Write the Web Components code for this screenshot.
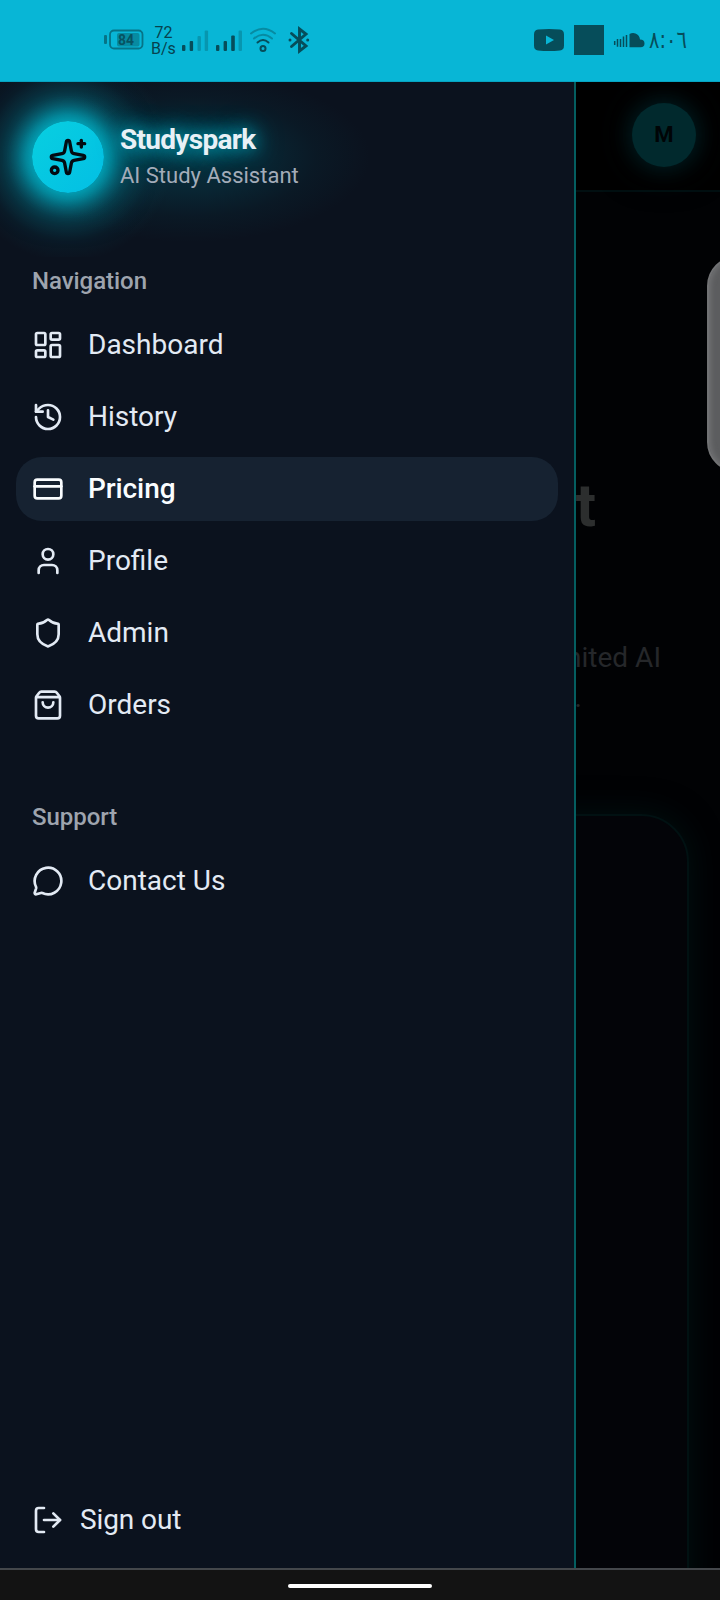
<!DOCTYPE html>
<html lang="en">
<head>
<meta charset="utf-8">
<title>Studyspark</title>
<style>
html,body{margin:0;background:#000}
body{width:720px;height:1600px;overflow:hidden;font-family:Roboto,"Noto Sans",sans-serif}
</style>
</head>
<body>
<study-app></study-app>
<script>
const define=(name,html)=>{
  const t=document.createElement('template');t.innerHTML=html;
  customElements.define(name,class extends HTMLElement{
    constructor(){super();this.attachShadow({mode:'open'}).appendChild(t.content.cloneNode(true));}
  });
};
const ICONS={
  dashboard:'<rect width="7" height="9" x="3" y="3" rx="1"/><rect width="7" height="5" x="14" y="3" rx="1"/><rect width="7" height="9" x="14" y="12" rx="1"/><rect width="7" height="5" x="3" y="16" rx="1"/>',
  history:'<path d="M3 12a9 9 0 1 0 9-9 9.75 9.75 0 0 0-6.74 2.74L3 8"/><path d="M3 3v5h5"/><path d="M12 7v5l4 2"/>',
  card:'<rect width="20" height="14" x="2" y="5" rx="2"/><path d="M2 10h20"/>',
  user:'<path d="M19 21v-2a4 4 0 0 0-4-4H9a4 4 0 0 0-4 4v2"/><circle cx="12" cy="7" r="4"/>',
  shield:'<path d="M20 13c0 5-3.5 7.5-7.66 8.95a1 1 0 0 1-.67-.01C7.5 20.5 4 18 4 13V6a1 1 0 0 1 1-1c2 0 4.5-1.2 6.24-2.72a1.17 1.17 0 0 1 1.52 0C14.51 3.81 17 5 19 5a1 1 0 0 1 1 1z"/>',
  bag:'<path d="M16 10a4 4 0 0 1-8 0"/><path d="M3.103 6.034h17.794"/><path d="M3.4 5.467a2 2 0 0 0-.4 1.2V20a2 2 0 0 0 2 2h14a2 2 0 0 0 2-2V6.667a2 2 0 0 0-.4-1.2l-2-2.667A2 2 0 0 0 17 2H7a2 2 0 0 0-1.6.8z"/>',
  chat:'<path d="M2.992 16.342a2 2 0 0 1 .094 1.167l-1.065 3.29a1 1 0 0 0 1.236 1.168l3.413-.998a2 2 0 0 1 1.099.092 10 10 0 1 0-4.777-4.719"/>',
  logout:'<path d="m16 17 5-5-5-5"/><path d="M21 12H9"/><path d="M9 21H5a2 2 0 0 1-2-2V5a2 2 0 0 1 2-2h4"/>',
  sparkles:'<path d="M11.017 2.814a1 1 0 0 1 1.966 0l1.051 5.558a2 2 0 0 0 1.594 1.594l5.558 1.051a1 1 0 0 1 0 1.966l-5.558 1.051a2 2 0 0 0-1.594 1.594l-1.051 5.558a1 1 0 0 1-1.966 0l-1.051-5.558a2 2 0 0 0-1.594-1.594l-5.558-1.051a1 1 0 0 1 0-1.966l5.558-1.051a2 2 0 0 0 1.594-1.594z"/><path d="M20 2v4"/><path d="M22 4h-4"/><circle cx="4" cy="20" r="2"/>'
};
customElements.define('line-icon',class extends HTMLElement{
  constructor(){super();this.attachShadow({mode:'open'});}
  connectedCallback(){
    this.shadowRoot.innerHTML=`<style>:host{display:block;flex:none;width:var(--icon,32px);height:var(--icon,32px)}svg{display:block;width:100%;height:100%}</style>
    <svg viewBox="0 0 24 24" fill="none" stroke="currentColor" stroke-width="2" stroke-linecap="round" stroke-linejoin="round">${ICONS[this.getAttribute('name')]}</svg>`;
  }
});
define('status-bar',`<style>
:host{display:flex;box-sizing:border-box;height:82px;padding:0 33px 2px 103px;align-items:center;justify-content:space-between;background:#08b6d6;border-bottom:1px solid #06a3c1;color:#064d5a}
div{display:flex;align-items:center}
svg{display:block;flex:none}
.rate{font-size:16px;line-height:16px;text-align:center;width:26px;margin:2px 0 0 6px;color:#07424e}
.clock{font:20px/30px "DejaVu Sans",sans-serif;width:38px;margin-left:4px;white-space:nowrap;justify-content:center;transform:scale(.97,1.2)}
</style>
<div>
<svg width="42" height="30" viewBox="103 25 42 30"><rect x="104" y="35" width="3" height="9" rx="1" fill="#067487"/><rect x="110" y="30.500" width="32.5" height="18" rx="4" fill="none" stroke="#067487" stroke-width="1.8"/><rect x="117" y="33" width="22.5" height="13.5" rx="2" fill="#078ba1"/><text x="126" y="45" font-size="14" font-weight="700" text-anchor="middle" textLength="16" lengthAdjust="spacingAndGlyphs" fill="#065361">84</text></svg>
<div class="rate"><span>72<br>B/s</span></div>
<svg width="134" height="30" viewBox="177 25 134 30" fill="currentColor">
<rect x="182" y="45" width="3.4" height="6" rx="1"/><rect x="189.7" y="41" width="3.4" height="10" rx="1"/><g fill="#0796af"><rect x="197.5" y="36" width="3.4" height="15" rx="1"/><rect x="204.7" y="30.5" width="3.4" height="20.5" rx="1"/><rect x="238.6" y="30.5" width="3.4" height="20.5" rx="1"/></g>
<rect x="216" y="45" width="3.4" height="6" rx="1"/><rect x="223.6" y="41" width="3.4" height="10" rx="1"/><rect x="231.2" y="35.5" width="3.6" height="15.5" rx="1"/>
<g fill="none" stroke-width="2" stroke-linecap="round"><path d="M251 33.5q12-9.500 24 0M254 38.500q9-7.500 18 0" stroke="#078ba2"/><path d="M257.500 42.500q5.500-5 11 0" stroke="currentColor"/><circle cx="263" cy="48.500" r="2.500" stroke="currentColor"/><path d="M291.500 33.500 306 46 299.500 51V29L306 34 291.500 46.500" stroke="currentColor" stroke-width="2.900"/></g><circle cx="290" cy="39.900" r="1.500"/><circle cx="307.700" cy="39.900" r="1.500"/>
</svg>
</div>
<div>
<svg width="112" height="32" viewBox="533 24 112 32" fill="currentColor"><path fill-rule="evenodd" d="M538 29.500q11-1 22 0 4 .5 4 5v11q0 4.500-4 5-11 1-22 0-4-.5-4-5v-11q0-4.500 4-5zM546 35.500v9l8-4.500z"/><rect x="574" y="25" width="30" height="30"/><path d="M629.500 34q3-1.500 6-.5 4 1.500 4.500 6 4.500 0 4.500 4t-4.500 3.700h-10.500z"/><path d="M614.700 41v4M617.500 39v7.800M620.500 39v8M623.500 36.500v10.500M626.500 35v12" stroke="currentColor" stroke-width="1.500"/></svg>
<div class="clock">٨:٠٦</div>
</div>`);
define('brand-header',`<style>
:host{display:flex;gap:16px;align-items:center;box-sizing:border-box;padding:39px 32px 64px;height:175px;
background:radial-gradient(ellipse 180px 85px at 190px 75px,#065a6b70 0,#054a5a58 40%,#063e4c28 70%,#0b121e00 100%),radial-gradient(circle 105px at 68px 75px,#05859a90 40%,#05647660 60%,#05485828 80%,#0b121e00 100%)}
.logo{--icon:40px;display:grid;place-items:center;flex:none;width:72px;height:72px;border-radius:50%;background:linear-gradient(135deg,#08cfe0,#03bfe4);color:#030b12;box-shadow:0 0 24px 4px #00c4da,0 0 44px 6px #00a4ba80}
.name{font-size:28px;line-height:36px;font-weight:700;letter-spacing:-.7px;color:#e8f0f6;text-shadow:0 0 18px #00b4ca,0 0 28px #00a4bad0}
.sub{position:relative;font-size:22px;line-height:32px;color:#a3acb9;margin:2px 0 1px}
</style><div class="logo"><line-icon name="sparkles"></line-icon></div><div><div class="name"><slot name="name"></slot></div><div class="sub"><slot></slot></div></div>`);
define('nav-item',`<style>
:host{display:flex;box-sizing:border-box;height:64px;align-items:center;gap:24px;padding:0 16px;border-radius:26px;font-size:28px;line-height:40px;color:#e3eaf4}
:host([active]){background:#162231;color:#fafdff;font-weight:500;letter-spacing:-.1px}
</style><slot name="icon"></slot><span><slot></slot></span>`);
define('nav-group',`<style>
:host{display:flex;flex-direction:column;gap:8px;padding:0 16px}
h2{margin:0;padding:0 16px;height:48px;line-height:48px;font-size:24px;font-weight:500;letter-spacing:-.05px;color:#9ea4ae}
</style><h2><slot name="title"></slot></h2><slot></slot>`);
define('side-drawer',`<style>
:host{position:absolute;z-index:2;left:0;top:0;width:576px;height:100%;box-sizing:border-box;border-right:2px solid #045e60;background:#0b121e;display:flex;flex-direction:column;overflow:hidden}
.two{margin-top:56px}
.out{margin-top:auto;padding:0 16px 16px}.out nav-item{gap:16px;letter-spacing:-.1px}
</style>
<brand-header><span slot="name">Studyspark</span>AI Study Assistant</brand-header>
<nav-group><span slot="title">Navigation</span>
<nav-item><line-icon slot="icon" name="dashboard"></line-icon>Dashboard</nav-item>
<nav-item><line-icon slot="icon" name="history"></line-icon>History</nav-item>
<nav-item active><line-icon slot="icon" name="card"></line-icon>Pricing</nav-item>
<nav-item><line-icon slot="icon" name="user"></line-icon>Profile</nav-item>
<nav-item><line-icon slot="icon" name="shield"></line-icon>Admin</nav-item>
<nav-item><line-icon slot="icon" name="bag"></line-icon>Orders</nav-item>
</nav-group>
<nav-group class="two"><span slot="title">Support</span>
<nav-item><line-icon slot="icon" name="chat"></line-icon>Contact Us</nav-item></nav-group>
<div class="out"><nav-item><line-icon slot="icon" name="logout"></line-icon>Sign out</nav-item></div>`);
define('pricing-page',`<style>
:host{display:flex;flex-direction:column;height:100%;overflow:hidden;background:#010204}
header{box-sizing:border-box;flex:none;height:110px;display:flex;justify-content:flex-end;align-items:center;padding:0 24px 3px;border-bottom:2px solid #010f11;background:#000}
.av{width:64px;height:64px;border-radius:50%;background:#01292d;color:#000406;display:grid;place-items:center;font-size:22px;font-weight:700;box-shadow:0 0 20px #001d21,0 0 40px #00161a}
h1{margin:278px 124px 0 0;text-align:right;font-size:60px;line-height:72px;font-weight:700;color:#2c2e2e}
.copy{font-size:28px;line-height:40px;color:#25272a;text-align:right;margin:96px 59px 0 0}
.copy p{margin:0}.copy .end{padding-right:79px}
section{flex:1;margin:96px 31px -60px 32px;border:2px solid #011112;border-radius:48px;background:#030408;box-shadow:0 0 32px #001011}
</style><header><div class="av">M</div></header><h1>t</h1><div class="copy"><p>nited AI</p><p class="end">.</p></div><section></section>`);
define('edge-handle',`<style>:host{position:absolute;z-index:3;left:707px;top:174px;width:60px;height:216px;box-sizing:border-box;border-radius:30px;background:#5c5d5f;border:2px solid #717274;box-shadow:inset 2px 0 5px #707173}</style>`);
define('gesture-bar',`<style>:host{display:grid;justify-items:center;align-items:start;height:32px;box-sizing:border-box;background:#131313;border-top:2px solid #44474b;padding-top:14px}
i{width:144px;height:4px;border-radius:2px;background:#fff}</style><i></i>`);
define('study-app',`<style>:host{display:grid;grid-template-rows:82px 1486px 32px;width:720px;height:1600px}
main{position:relative;overflow:hidden;height:1486px}</style><status-bar></status-bar><main><pricing-page></pricing-page><side-drawer></side-drawer><edge-handle></edge-handle></main><gesture-bar></gesture-bar>`);
</script>
</body>
</html>
